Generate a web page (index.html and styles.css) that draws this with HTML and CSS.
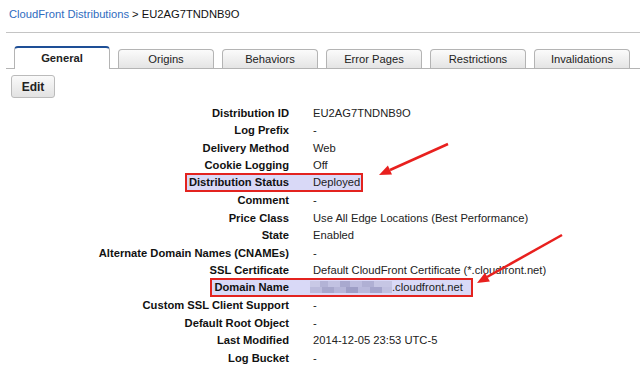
FILE: index.html
```html
<!DOCTYPE html>
<html lang="en">
<head>
  <meta charset="UTF-8">
  <title>CloudFront Distributions</title>
  <link rel="stylesheet" href="styles.css">
</head>
<body>
  <div class="crumb"><a href="#">CloudFront Distributions</a> &gt; EU2AG7TNDNB9O</div>

  <div class="page">
    <div class="tabs">
      <div class="tab active">General</div>
      <div class="tab">Origins</div>
      <div class="tab">Behaviors</div>
      <div class="tab">Error Pages</div>
      <div class="tab">Restrictions</div>
      <div class="tab">Invalidations</div>
    </div>

    <button class="edit">Edit</button>

    <div class="details">
      <div class="label">Distribution ID</div><div class="value">EU2AG7TNDNB9O</div>
      <div class="label">Log Prefix</div><div class="value">-</div>
      <div class="label">Delivery Method</div><div class="value">Web</div>
      <div class="label">Cookie Logging</div><div class="value">Off</div>
      <div class="label mark"><span class="mark-l">Distribution Status</span></div><div class="value"><span class="mark-v">Deployed</span></div>
      <div class="label">Comment</div><div class="value">-</div>
      <div class="label">Price Class</div><div class="value">Use All Edge Locations (Best Performance)</div>
      <div class="label">State</div><div class="value">Enabled</div>
      <div class="label">Alternate Domain Names (CNAMEs)</div><div class="value">-</div>
      <div class="label">SSL Certificate</div><div class="value">Default CloudFront Certificate (*.cloudfront.net)</div>
      <div class="label mark"><span class="mark-l">Domain Name</span></div><div class="value"><span class="mark-v wide"><span class="blur"></span>.cloudfront.net</span></div>
      <div class="label">Custom SSL Client Support</div><div class="value">-</div>
      <div class="label">Default Root Object</div><div class="value">-</div>
      <div class="label">Last Modified</div><div class="value">2014-12-05 23:53 UTC-5</div>
      <div class="label">Log Bucket</div><div class="value">-</div>
    </div>
  </div>

  <!-- annotation arrows -->
  <svg class="arrows" width="640" height="371" viewBox="0 0 640 371">
    <line x1="448" y1="144" x2="390" y2="170" />
    <polygon points="379,175 392,174.6 387.9,165.5" />
    <line x1="562" y1="235" x2="487" y2="277" />
    <polygon points="477,283 489.9,281.5 485,272.7" />
  </svg>
</body>
</html>
```

FILE: styles.css
```css
body {
  margin: 0;
  font-family: "Liberation Sans", Arial, sans-serif;
  font-size: 11.2px;
  color: #222;
  background: #fff;
}

.crumb {
  padding: 6px 9px 10px 3px;
  margin-left: 6px;
  line-height: 16px;
  color: #111;
  border-bottom: 1px solid #c4c4c4;
}

.crumb a {
  color: #2f6cc0;
  text-decoration: none;
}

.page {
  margin-left: 6px;
}

.tabs {
  display: flex;
  align-items: flex-end;
  gap: 8px;
  margin-top: 14px;
  padding-left: 8px;
  border-bottom: 1px solid #b4b4b4;
  height: 21px;
}

.tab {
  width: 94px;
  height: 18px;
  line-height: 18px;
  text-align: center;
  border: 1px solid #b4b4b4;
  border-bottom: none;
  border-radius: 4px 4px 0 0;
  background: linear-gradient(#fbfbfb, #e4e4e4);
  color: #222;
}

.tab.active {
  border-top: 2px solid #1e4f96;
  background: #fff;
  font-weight: bold;
  margin-bottom: -1px;
  height: 20px;
  line-height: 20px;
  padding-bottom: 1px;
}

.edit {
  display: block;
  margin: 6px 0 0 5px;
  width: 44px;
  height: 23px;
  font-family: inherit;
  font-size: 12px;
  font-weight: bold;
  color: #222;
  border: 1px solid #bbb;
  border-radius: 3px;
  background: linear-gradient(#fafafa, #e2e2e2);
  padding: 0;
}

.details {
  display: grid;
  grid-template-columns: 307px 1fr;
  grid-auto-rows: 17.5px;
  align-items: center;
  margin-top: 6px;
}

.label {
  text-align: right;
  font-weight: bold;
  color: #111;
  padding-right: 24px;
}

.value {
  color: #222;
}

.label.mark {
  padding-right: 0;
}

.mark-l,
.mark-v {
  display: inline-block;
  line-height: 15px;
  background: #d9d9f7;
  border: 2px solid #e3231f;
}

.mark-l {
  border-right: none;
  padding: 0 24px 0 2px;
}

.mark-v {
  border-left: none;
  padding-right: 1px;
}

.mark-v.wide {
  padding-right: 8px;
}

.blur {
  display: inline-block;
  vertical-align: -2px;
  width: 82px;
  height: 12px;
  margin-left: -3px;
  background:
    linear-gradient(90deg, #c9c9e6 0 10px, #b3b3d6 10px 18px, #c2c2e2 18px 30px, #a9a9cf 30px 40px, #bdbddf 40px 52px, #b0b0d4 52px 64px, #c6c6e4 64px 82px) top / 100% 6px no-repeat,
    linear-gradient(90deg, #bbbbdc 0 12px, #a7a7cc 12px 24px, #b6b6d9 24px 36px, #9e9ec6 36px 48px, #b9b9dc 48px 60px, #a5a5cc 60px 72px, #c0c0e0 72px 82px) bottom / 100% 6px no-repeat;
}

.arrows {
  position: absolute;
  top: 0;
  left: 0;
  pointer-events: none;
}

.arrows line {
  stroke: #e8201e;
  stroke-width: 2.5;
}

.arrows polygon {
  fill: #e8201e;
}
```
